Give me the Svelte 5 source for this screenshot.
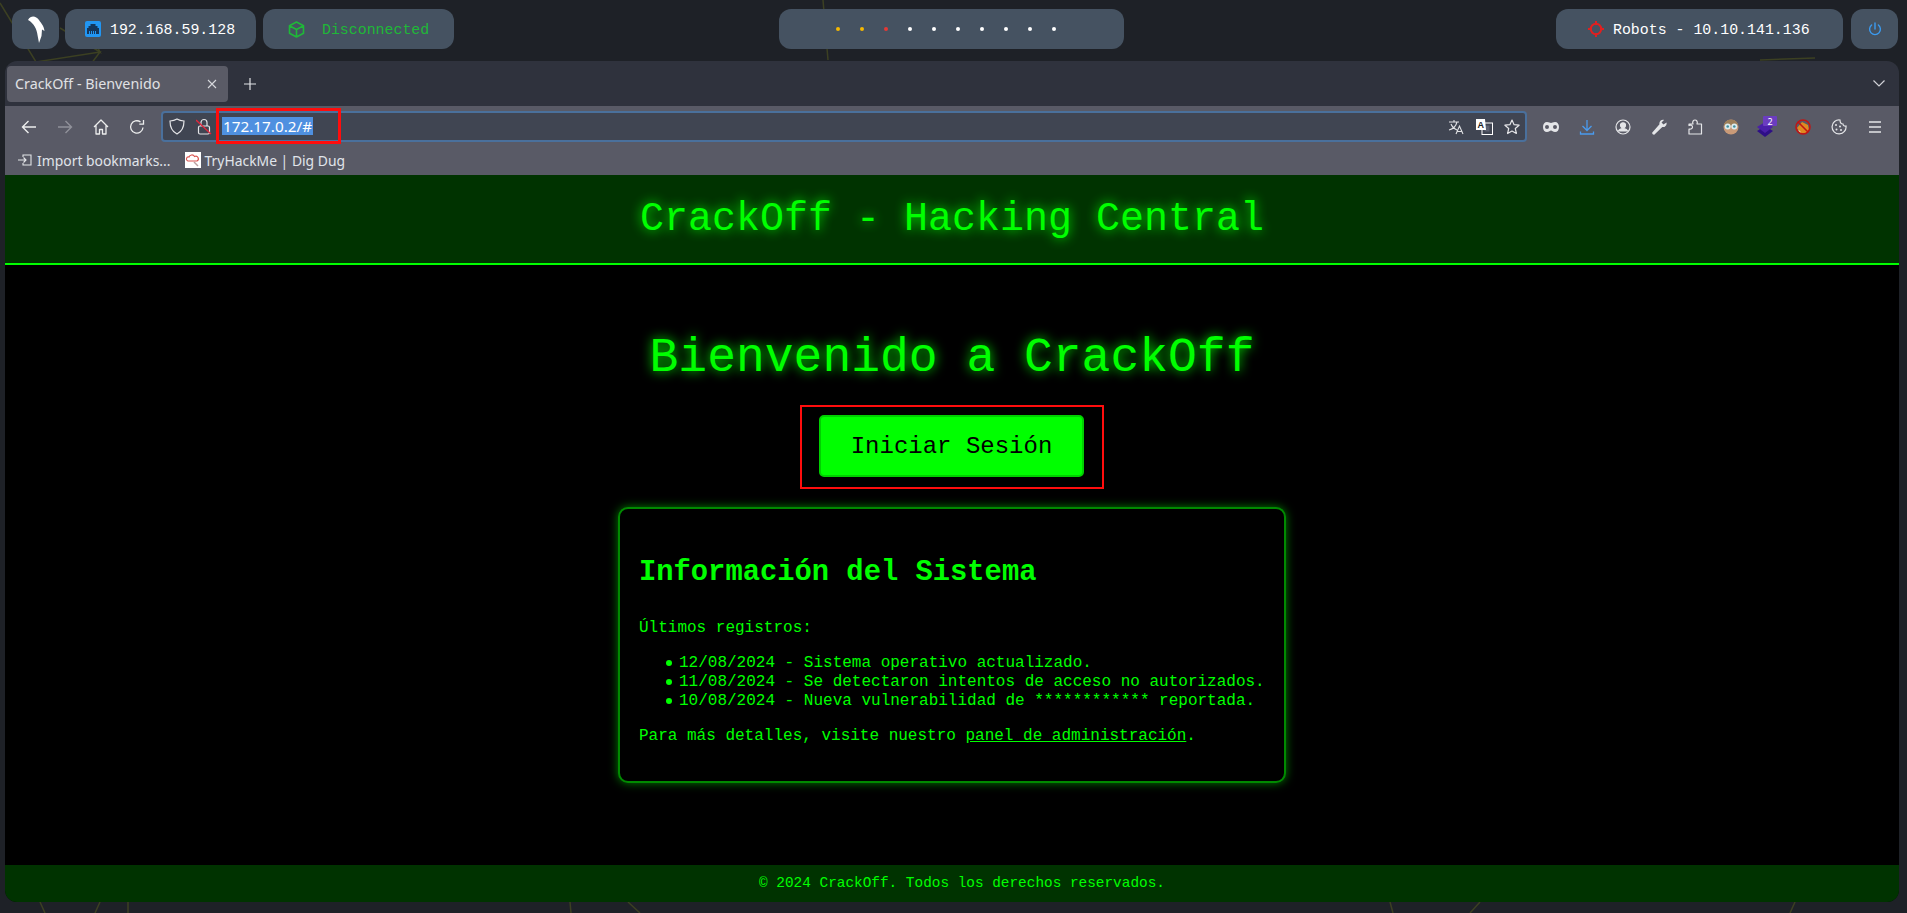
<script lang="ts">
const dots = ["#f5b800", "#f5b800", "#e53935", "#fff", "#fff", "#fff", "#fff", "#fff", "#fff", "#fff"]
const logs = [
  "12/08/2024 - Sistema operativo actualizado.",
  "11/08/2024 - Se detectaron intentos de acceso no autorizados.",
  "10/08/2024 - Nueva vulnerabilidad de ************ reportada."
]
</script>

<div class="desktop">
  <svg class="wallpaper" width="1907" height="913" viewBox="0 0 1907 913" fill="none" stroke="#3c4022" stroke-width="1.5">
    <path d="M0 3 L36 62 L100 52 L85 72 M60 28 L100 52 L96 44" />
    <path d="M823 0 L828 60" />
    <path d="M1760 60 L1815 58" />
    <path d="M40 902 L45 913 M100 902 L95 913 M128 902 L128 913 M570 902 L571 913 M628 902 L640 913 M1390 902 L1393 913 M1480 902 L1470 913 M1795 902 L1790 913" />
  </svg>

  <div class="topbar">
    <div class="group">
      <div class="pill logo">
        <svg width="20" height="30" viewBox="0 0 20 30">
          <path d="M2 6 C5 1 10 2 13 6 C15 9 18 12 18.500 17 L16 15.500 L15.500 22 L13 29 L11.500 21 C11 16 8 9 2 6 Z" fill="#fff" />
        </svg>
      </div>
      <div class="pill ip">
        <svg width="16" height="16" viewBox="0 0 16 16">
          <rect width="16" height="16" rx="2" fill="#2196f3" />
          <path d="M5.500 3h5v2h2v2h1.500v6h-12v-6h1.500v-2h2z" fill="#14365c" />
          <path d="M4.500 10v3M6.500 10v3M8.500 10v3M10.500 10v3" stroke="#2196f3" />
        </svg>
        <span>192.168.59.128</span>
      </div>
      <div class="pill vpn">
        <svg width="17" height="17" viewBox="0 0 17 17" fill="none" stroke="#1fb838" stroke-width="1.600" stroke-linejoin="round">
          <path d="M8.500 1 L15.500 4.800 V12.200 L8.500 16 L1.500 12.200 V4.800 Z M1.500 4.800 L8.500 8.500 L15.500 4.800 M8.500 8.500 V16" />
        </svg>
        <span>Disconnected</span>
      </div>
    </div>

    <div class="pill workspaces">
      {#each dots as d}
        <i class="dot" style="background:{d}"></i>
      {/each}
    </div>

    <div class="group right">
      <div class="pill target">
        <svg width="16" height="16" viewBox="0 0 16 16" fill="none" stroke="#e02020" stroke-width="2">
          <circle cx="8" cy="8" r="5.200" />
          <path d="M8 0v4M8 12v4M0 8h4M12 8h4" />
        </svg>
        <span>Robots - 10.10.141.136</span>
      </div>
      <div class="pill power">
        <svg width="14" height="14" viewBox="0 0 14 14" fill="none" stroke="#3b9bf0" stroke-width="1.400" stroke-linecap="round">
          <path d="M7 1v6M3.600 3a5.400 5.400 0 1 0 6.800 0" />
        </svg>
      </div>
    </div>
  </div>

  <div class="window">
    <div class="tabs">
      <div class="tab">
        <span>CrackOff - Bienvenido</span>
        <svg width="10" height="10" viewBox="0 0 10 10" stroke="#d6d7dc" stroke-width="1.100"><path d="M1 1l8 8M9 1l-8 8" /></svg>
      </div>
      <svg class="newtab" width="12" height="12" viewBox="0 0 12 12" stroke="#e2e3e7" stroke-width="1.200"><path d="M6 0v12M0 6h12" /></svg>
      <svg class="chevron" width="12" height="7" viewBox="0 0 12 7" fill="none" stroke="#d0d1d6" stroke-width="1.200"><path d="M.5.5L6 6 11.500.5" /></svg>
    </div>

    <div class="nav">
      <button class="tool" aria-label="Back">
        <svg width="16" height="16" viewBox="0 0 16 16" fill="none" stroke="#eceded" stroke-width="1.400"><path d="M15 8H1.500M7.500 2L1.500 8l6 6" /></svg>
      </button>
      <button class="tool" aria-label="Forward">
        <svg width="16" height="16" viewBox="0 0 16 16" fill="none" stroke="#90919a" stroke-width="1.400"><path d="M1 8h13.500M8.500 2l6 6-6 6" /></svg>
      </button>
      <button class="tool" aria-label="Home">
        <svg width="16" height="16" viewBox="0 0 16 16" fill="none" stroke="#eceded" stroke-width="1.300" stroke-linejoin="round"><path d="M1 8L8 1l7 7M3 6.500V15h3.500v-4.500h3V15H13V6.500" /></svg>
      </button>
      <button class="tool" aria-label="Reload">
        <svg width="16" height="16" viewBox="0 0 16 16" fill="none" stroke="#eceded" stroke-width="1.300"><path d="M14 8.500A6.200 6.200 0 1 1 11.500 3M14.500 1v4.200h-4.200" /></svg>
      </button>

      <div class="urlbar">
        <svg width="16" height="17" viewBox="0 0 16 17" fill="none" stroke="#e4e5e8" stroke-width="1.200"><path d="M8 1c2 1.200 4 1.800 7 2 0 6-2 10.500-7 13C3 13.500 1 9 1 3c3-.2 5-.8 7-2z" /></svg>
        <svg class="lock" width="16" height="17" viewBox="0 0 16 17" fill="none" stroke="#e4e5e8" stroke-width="1.200"><rect x="2.500" y="8" width="11" height="8" rx="1.500" /><path d="M5 8V4.500a3 3 0 0 1 6 0V8" /><path d="M0 2l15 14" stroke="#e0263c" stroke-width="1.300" /></svg>
        <span class="address">172.17.0.2/#</span>
        <span class="mark"></span>
        <div class="spacer"></div>
        <svg width="18" height="16" viewBox="0 0 18 16" fill="none" stroke="#dfe0e3" stroke-width="1.100"><path d="M1 3h10M6 1v2M9 3c-1 4-4 7-8 8M3 5c1 3 4 5 6 6M8 15l3.500-8L15 15M9.500 12.500h4" /></svg>
        <svg class="gt" width="17" height="16" viewBox="0 0 17 16"><rect x="6" y="4" width="10.500" height="11.500" fill="none" stroke="#fff" /><rect x="8.500" y="6.500" width="5" height="6" fill="#5d6170" /><path d="M0 0h9l1 11H0z" fill="#fff" /><text x="1.500" y="8.500" class="gt-a">A</text></svg>
        <svg class="star" width="16" height="16" viewBox="0 0 16 16" fill="none" stroke="#e4e5e8" stroke-width="1.200" stroke-linejoin="round"><path d="M8 1l2.100 4.700 5 .5-3.800 3.300 1.100 5L8 12l-4.400 2.500 1.100-5L.9 6.200l5-.5z" /></svg>
      </div>

      <button class="tool" aria-label="Private">
        <svg width="16" height="10" viewBox="0 0 16 10" fill="#e4e5e8" fill-rule="evenodd"><path d="M4 0c2 0 3 1 4 1s2-1 4-1c2.500 0 4 2 4 5s-1.500 5-4 5c-2 0-3-1.500-4-1.500S6 10 4 10C1.500 10 0 8 0 5s1.500-5 4-5zM4 3a2 2 0 1 0 0 4 2 2 0 0 0 0-4zm8 0a2 2 0 1 0 0 4 2 2 0 0 0 0-4z" /></svg>
      </button>
      <button class="tool" aria-label="Downloads">
        <svg width="16" height="16" viewBox="0 0 16 16" fill="none" stroke="#4a9bee" stroke-width="1.300"><path d="M8 1v10M3.500 7L8 11.500 12.500 7M1.500 12.500V15h13v-2.500" /></svg>
      </button>
      <button class="tool" aria-label="Account">
        <svg width="16" height="16" viewBox="0 0 16 16" fill="none" stroke="#e4e5e8" stroke-width="1.200"><circle cx="8" cy="8" r="7" /><circle cx="8" cy="6.300" r="2.500" fill="#e4e5e8" /><path d="M3.500 12c1-2 2.500-2.500 4.500-2.500s3.500.5 4.500 2.500z" fill="#e4e5e8" /></svg>
      </button>
      <button class="tool" aria-label="Tools">
        <svg width="16" height="16" viewBox="0 0 16 16" fill="#e4e5e8"><path d="M15.500 3.500c.6 2.600-1.500 5-4.200 4.500L3.500 15.500c-.8.800-3-.9-2.200-2L8.500 5.200C7.800 2.700 10.500.2 13 1L10.500 3.500l2 2z" /></svg>
      </button>
      <button class="tool" aria-label="Extensions">
        <svg width="15" height="16" viewBox="0 0 15 16" fill="none" stroke="#e4e5e8" stroke-width="1.200" stroke-linejoin="round"><path d="M1 15V10c2 .5 3.500-.5 3.500-2S3 5.500 1 6.500V5h4C4 2.500 5.500 1 7 1s3 1.500 2 4h4.500v10z" /></svg>
      </button>
      <button class="tool" aria-label="Profile">
        <svg width="16" height="16" viewBox="0 0 16 16">
          <circle cx="8" cy="8" r="7.500" fill="#c99a78" />
          <path d="M.7 6.500a7.500 7.500 0 0 1 14.600 0z" fill="#9c7f5a" />
          <circle cx="4.700" cy="7.500" r="3" fill="#dcecee" />
          <circle cx="11.300" cy="7.500" r="3" fill="#dcecee" />
          <circle cx="4.700" cy="7.500" r="1.300" fill="#3f8e9e" />
          <circle cx="11.300" cy="7.500" r="1.300" fill="#3f8e9e" />
        </svg>
      </button>
      <button class="tool" aria-label="Layers">
        <svg width="20" height="22" viewBox="0 0 20 22">
          <path d="M8 10l8 5-8 6-8-6z" fill="#2e0f86" />
          <path d="M8 6l8 5-8 6-8-6z" fill="#4a1fa8" />
          <rect x="6" y="0" width="14" height="10" rx="1" fill="#6b3dc0" />
          <text x="13" y="8.500" class="badge">2</text>
        </svg>
      </button>
      <button class="tool" aria-label="Blocked">
        <svg width="16" height="16" viewBox="0 0 16 16">
          <path d="M2 9l5-6 6 3 1 5-3 3H5z" fill="#e08a20" />
          <path d="M3 11l2 1 1 2z" fill="#fff" />
          <circle cx="8" cy="8" r="7" fill="none" stroke="#c01515" stroke-width="1.600" />
          <path d="M3 3l10 10" stroke="#c01515" stroke-width="1.600" />
        </svg>
      </button>
      <button class="tool" aria-label="Cookies">
        <svg width="16" height="16" viewBox="0 0 16 16" fill="none" stroke="#e4e5e8" stroke-width="1.200"><path d="M9 1a7 7 0 1 0 6 6c-1.500.5-3-.5-3-2-1.500 0-3-1.500-3-4z" /><circle cx="5" cy="6" r="1" fill="#e4e5e8" stroke="none" /><circle cx="9" cy="7.500" r="1" fill="#e4e5e8" stroke="none" /><circle cx="5.500" cy="10.500" r="1" fill="#e4e5e8" stroke="none" /><circle cx="10" cy="11" r="1" fill="#e4e5e8" stroke="none" /></svg>
      </button>
      <button class="tool" aria-label="Menu">
        <svg width="14" height="12" viewBox="0 0 14 12" stroke="#e4e5e8" stroke-width="1.300"><path d="M1 1h12M1 6h12M1 11h12" /></svg>
      </button>
    </div>

    <div class="bookmarks">
      <svg class="import" width="14" height="12" viewBox="0 0 14 12" fill="none" stroke="#e4e5e8" stroke-width="1.100"><path d="M5 3V1h8v10H5V9M0 6h8M5.500 3.500L8 6 5.500 8.500" /></svg>
      <span class="bm">Import bookmarks...</span>
      <svg class="fav" width="16" height="16" viewBox="0 0 16 16"><rect width="16" height="16" fill="#fff" /><path d="M3 9a2 2 0 0 1 1-4 3 3 0 0 1 5.500-.5A2.500 2.500 0 0 1 12 9z" fill="none" stroke="#d9534f" stroke-width="1.100" /><path d="M9 10l4 4" stroke="#b9a0a0" stroke-width="1.500" /></svg>
      <span class="bm">TryHackMe | Dig Dug</span>
    </div>

    <div class="page">
      <header>
        <h1>CrackOff - Hacking Central</h1>
      </header>

      <main>
        <h2 class="welcome">Bienvenido a CrackOff</h2>
        <div class="highlight">
          <button class="login">Iniciar Sesión</button>
        </div>
        <section class="card">
          <h2>Información del Sistema</h2>
          <p>Últimos registros:</p>
          <ul>
            {#each logs as log}
              <li>{log}</li>
            {/each}
          </ul>
          <p>Para más detalles, visite nuestro <a href="#admin">panel de administración</a>.</p>
        </section>
      </main>

      <footer>© 2024 CrackOff. Todos los derechos reservados.</footer>
    </div>
  </div>
</div>

<style>
:global(body) {
  margin: 0;
  background: #1e2127;
}
.desktop {
  position: relative;
  width: 1907px;
  height: 913px;
  overflow: hidden;
  display: flex;
  flex-direction: column;
  padding: 9px 8px 11px 5px;
  box-sizing: border-box;
}
.wallpaper {
  position: absolute;
  left: 0;
  top: 0;
}
.topbar {
  position: relative;
  display: grid;
  grid-template-columns: 767px 345px 1fr;
  height: 40px;
  margin: 0 1px 12px 7px;
  font-family: "Liberation Mono", monospace;
  font-size: 14.900px;
  color: #fff;
}
.group {
  display: flex;
  gap: 6px;
}
.right {
  justify-content: flex-end;
  gap: 8px;
}
.pill {
  display: flex;
  align-items: center;
  height: 40px;
  background: #455261;
  border-radius: 12px;
  box-sizing: border-box;
}
.pill span {
  margin-top: 2px;
}
.logo {
  width: 47px;
  justify-content: center;
}
.ip {
  width: 191px;
  padding-left: 20px;
  gap: 9px;
}
.vpn {
  width: 191px;
  margin-left: 1px;
  padding-left: 25px;
  gap: 17px;
  color: #1fb838;
}
.workspaces {
  padding-left: 57px;
  gap: 20px;
}
.dot {
  width: 4px;
  height: 4px;
  border-radius: 50%;
}
.target {
  width: 287px;
  padding-left: 32px;
  gap: 9px;
}
.power {
  width: 47px;
  justify-content: center;
}
.window {
  position: relative;
  flex: 1;
  display: flex;
  flex-direction: column;
  border-radius: 12px;
  overflow: hidden;
  background: #2f323d;
  font-family: "Noto Sans", sans-serif;
  color: #e6e7ea;
}
.tabs {
  display: flex;
  align-items: center;
  height: 45px;
  flex: none;
  padding: 0 14px 0 2px;
}
.tab {
  display: flex;
  align-items: center;
  justify-content: space-between;
  width: 221px;
  height: 36px;
  padding: 0 11px 0 8px;
  box-sizing: border-box;
  border-radius: 4px;
  background: #5a5b66;
  font-size: 14.300px;
  color: #e0e1e4;
}
.newtab {
  margin-left: 16px;
}
.chevron {
  margin-left: auto;
}
.nav {
  display: flex;
  align-items: flex-start;
  height: 43px;
  flex: none;
  padding: 5px 6px 0 6px;
  box-sizing: border-box;
  background: #595a66;
}
.tool {
  width: 36px;
  height: 31px;
  flex: none;
  display: flex;
  align-items: center;
  justify-content: center;
  padding: 0;
  border: none;
  background: none;
}
.urlbar {
  position: relative;
  flex: 1;
  height: 31px;
  margin: 0 6px;
  padding: 0 5px 0 6px;
  display: flex;
  align-items: center;
  box-sizing: border-box;
  background: #404552;
  border: 2px solid #4a709c;
  border-radius: 4px;
}
.lock {
  margin-left: 11px;
}
.address {
  margin: 0 0 2px 10px;
  padding: 0 1px;
  background: #4f90e0;
  color: #fff;
  font-size: 15.300px;
  line-height: 18px;
}
.mark {
  position: absolute;
  left: 53px;
  top: -5px;
  width: 125px;
  height: 36px;
  border: 3px solid #ff0d0d;
  box-sizing: border-box;
}
.spacer {
  flex: 1;
}
.gt {
  margin-left: 10px;
}
.star {
  margin-left: 11px;
}
.gt-a {
  font-family: "Liberation Sans", sans-serif;
  font-size: 9px;
  font-weight: bold;
  fill: #222;
}
.badge {
  font-family: "Noto Sans", sans-serif;
  font-size: 9px;
  fill: #fff;
  text-anchor: middle;
}
.bookmarks {
  display: flex;
  align-items: center;
  height: 26px;
  flex: none;
  padding: 0 0 4px 13px;
  box-sizing: border-box;
  background: #595a66;
}
.import {
  margin-right: 5px;
}
.bm {
  font-size: 13.900px;
  color: #e0e4ea;
}
.fav {
  margin: 0 4px 0 14px;
}
.page {
  flex: 1;
  display: flex;
  flex-direction: column;
  background: #000;
  color: #0f0;
  font-family: "Liberation Mono", "Courier New", monospace;
}
header {
  background: #030;
  border-bottom: 2px solid #0f0;
  padding: 22px 20px 20px;
  text-align: center;
}
h1 {
  margin: 0;
  font-size: 40px;
  font-weight: normal;
  line-height: 46px;
  text-shadow: 0 0 12px #0f0;
}
main {
  flex: 1;
  display: flex;
  flex-direction: column;
  align-items: center;
  padding-top: 66px;
}
.welcome {
  margin: 0 0 20px;
  font-size: 48px;
  font-weight: normal;
  line-height: 54px;
  text-shadow: 0 0 12px #0f0;
}
.highlight {
  width: 304px;
  height: 84px;
  margin-bottom: 18px;
  padding: 8px 0 0 17px;
  box-sizing: border-box;
  border: 2px solid #ff0d0d;
}
.login {
  width: 265px;
  height: 62px;
  padding: 0;
  background: #0f0;
  border: 2px solid #00d000;
  border-radius: 5px;
  color: #000;
  font-family: inherit;
  font-size: 24px;
}
.card {
  width: 668px;
  box-sizing: border-box;
  padding: 19px 20px 19px 19px;
  background: #000;
  border: 2px solid #008a00;
  border-radius: 10px;
  box-shadow: 0 0 10px rgba(0, 255, 0, 0.5);
  font-size: 16px;
  line-height: 19px;
}
.card h2 {
  margin: 28px 0 30px;
  font-size: 28.800px;
  line-height: 33px;
}
.card p {
  margin: 16px 0;
}
ul {
  margin: 16px 0;
  padding-left: 40px;
  list-style: none;
}
li {
  position: relative;
  white-space: nowrap;
}
li::before {
  content: "";
  position: absolute;
  left: -13px;
  top: 6px;
  width: 6px;
  height: 6px;
  border-radius: 50%;
  background: #0f0;
}
a {
  color: #0f0;
}
footer {
  height: 37px;
  flex: none;
  padding-left: 20px;
  background: #030;
  text-align: center;
  font-size: 14.400px;
  line-height: 37px;
}
</style>
